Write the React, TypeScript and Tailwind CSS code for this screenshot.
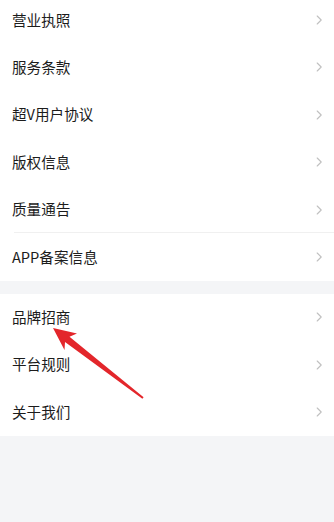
import React from "react";

const group1 = ["营业执照", "服务条款", "超V用户协议", "版权信息", "质量通告", "APP备案信息"];
const group2 = ["品牌招商", "平台规则", "关于我们"];

function Chevron() {
  return (
    <svg width="8" height="12" viewBox="0 0 8 12" className="shrink-0">
      <path d="M2.2 2 L6.2 6 L2.2 10" fill="none" stroke="#c0c0c0" strokeWidth="1.1" strokeLinecap="round" strokeLinejoin="round" />
    </svg>
  );
}

function Row({ label, divider }: { label: string; divider?: boolean }) {
  return (
    <div className="relative flex h-[47.4px] items-center justify-between pl-[12px] pr-[11px]">
      <span className="text-[14.6px] text-[#1c1c1c] leading-none">{label}</span>
      <Chevron />
      {divider && <div className="absolute bottom-0 left-[14px] right-0 h-px bg-[#f0f0f0]" />}
    </div>
  );
}

export default function App() {
  return (
    <div
      className="relative h-[522px] w-[334px] overflow-hidden bg-[#f4f5f7]"
      style={{ fontFamily: '"Noto Sans CJK SC", "Noto Sans", sans-serif' }}
    >
      <div className="-mt-[3.7px] bg-white">
        {group1.map((l, i) => (
          <Row key={l} label={l} divider={i === 4} />
        ))}
      </div>
      <div className="mt-[13px] bg-white">
        {group2.map((l) => (
          <Row key={l} label={l} />
        ))}
      </div>
      <svg className="pointer-events-none absolute left-0 top-0" width="334" height="522" viewBox="0 0 334 522">
        <polygon
          points="53,328 77,333.5 69.5,336.8 143.6,397.2 142.4,398.8 65,342 64.5,350"
          fill="#e3262b"
        />
      </svg>
    </div>
  );
}
